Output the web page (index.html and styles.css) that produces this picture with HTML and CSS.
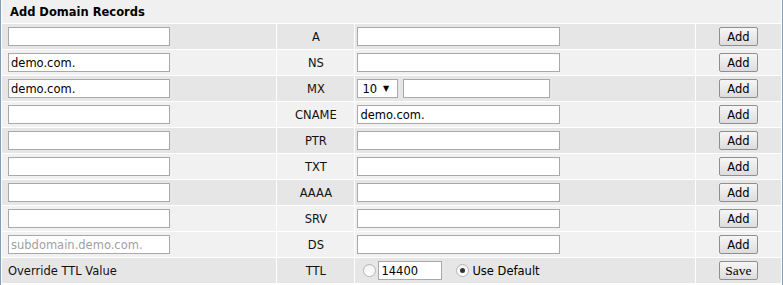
FILE: index.html
```html
<!DOCTYPE html>
<html>
<head>
<meta charset="utf-8">
<link rel="stylesheet" href="styles.css">
</head>
<body>
<div class="panel">
<table class="records">
<colgroup><col class="c1"><col class="c2"><col class="c3"><col class="c4"></colgroup>
<tr class="head"><th colspan="4">Add Domain Records</th></tr>
<tr class="dark"><td class="name"><span class="field w1"></span></td><td class="type">A</td><td class="val"><span class="field w2"></span></td><td class="act"><span class="btn">Add</span></td></tr>
<tr class="light"><td class="name"><span class="field w1">demo.com.</span></td><td class="type">NS</td><td class="val"><span class="field w2"></span></td><td class="act"><span class="btn">Add</span></td></tr>
<tr class="dark"><td class="name"><span class="field w1">demo.com.</span></td><td class="type">MX</td><td class="val"><span class="mx"><span class="select">10 <span class="arrow">▼</span></span><span class="field w3"></span></span></td><td class="act"><span class="btn">Add</span></td></tr>
<tr class="light"><td class="name"><span class="field w1"></span></td><td class="type">CNAME</td><td class="val"><span class="field w2">demo.com.</span></td><td class="act"><span class="btn">Add</span></td></tr>
<tr class="dark"><td class="name"><span class="field w1"></span></td><td class="type">PTR</td><td class="val"><span class="field w2"></span></td><td class="act"><span class="btn">Add</span></td></tr>
<tr class="light"><td class="name"><span class="field w1"></span></td><td class="type">TXT</td><td class="val"><span class="field w2"></span></td><td class="act"><span class="btn">Add</span></td></tr>
<tr class="dark"><td class="name"><span class="field w1"></span></td><td class="type">AAAA</td><td class="val"><span class="field w2"></span></td><td class="act"><span class="btn">Add</span></td></tr>
<tr class="light"><td class="name"><span class="field w1"></span></td><td class="type">SRV</td><td class="val"><span class="field w2"></span></td><td class="act"><span class="btn">Add</span></td></tr>
<tr class="light"><td class="name"><span class="field w1 ph">subdomain.demo.com.</span></td><td class="type">DS</td><td class="val"><span class="field w2"></span></td><td class="act"><span class="btn">Add</span></td></tr>
<tr class="dark"><td class="name label">Override TTL Value</td><td class="type">TTL</td><td class="val"><span class="ttl"><span class="radio"></span><span class="field w4">14400</span><span class="radio on"></span><span class="def">Use Default</span></span></td><td class="act"><span class="btn save">Save</span></td></tr>
</table>
</div>
</body>
</html>
```
FILE: styles.css
```css
html, body { margin: 0; padding: 0; background: #fff; }
body { font-family: "DejaVu Sans", Verdana, sans-serif; font-size: 11.5px; color: #000; }
.panel {
  width: 781px; height: 285px;
  border-left: 1px solid #7f9db9; border-right: 1px solid #7f9db9;
  background: #fff; overflow: hidden;
}
.records { border-collapse: separate; border-spacing: 1px; margin: -1px 0 0 0; width: 781px; table-layout: fixed; }
.c1 { width: 274px; } .c2 { width: 77px; } .c3 { width: 339px; } .c4 { width: 85px; }
.records th, .records td { padding: 0; height: 25px; }
.head th { height: 23px; background: #f0f0f0; text-align: left; padding-left: 8px; font-weight: bold; font-size: 11.5px; }
.dark td { background: #e6e6e6; }
.light td { background: #f1f1f1; }
.name { padding-left: 6px !important; }
.type { text-align: center; color: #111; }
.val { padding-left: 2px !important; }
.act { text-align: center; }
.field {
  display: inline-flex; align-items: center; box-sizing: border-box;
  height: 19px; border: 1px solid #a9a9a9; background: #fff;
  padding: 0 2px; vertical-align: middle; white-space: nowrap; overflow: hidden;
}
.w1 { width: 162px; } .w2 { width: 203px; } .w3 { width: 147px; } .w4 { width: 64px; }
.ph { color: #a0a0a0; }
.mx { display: flex; align-items: center; gap: 5px; }
.select {
  display: inline-flex; align-items: center; box-sizing: border-box;
  width: 41px; height: 19px; border: 1px solid #a9a9a9; background: #fff; padding: 0 4px;
}
.arrow { font-size: 8px; margin-left: 6px; }
.btn {
  display: inline-flex; align-items: center; justify-content: center; box-sizing: border-box;
  width: 39px; height: 19px; border: 1px solid #8f8f8f; border-radius: 2px;
  background: linear-gradient(#f6f6f6, #dddddd); font-size: 11.5px; vertical-align: middle;
}
.save { font-family: "Liberation Serif", serif; font-size: 13.5px; }
.label { color: #111; }
.ttl { display: flex; align-items: center; padding-left: 6px; }
.radio {
  box-sizing: border-box; width: 13px; height: 13px; border-radius: 50%;
  border: 1px solid #b5b5b5; background: linear-gradient(#f2f2f2, #fff); position: relative;
}
.ttl .w4 { margin-left: 2px; }
.radio.on { margin-left: 14px; }
.radio.on::after {
  content: ""; position: absolute; left: 3px; top: 3px; width: 5px; height: 5px; border-radius: 50%; background: #333;
}
.def { margin-left: 3px; }
```
